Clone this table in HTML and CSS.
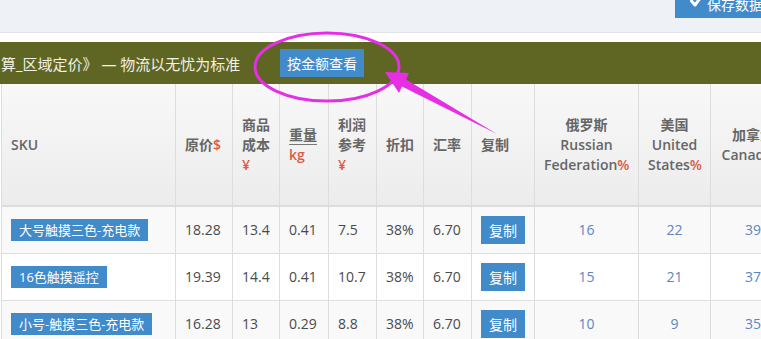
FILE: index.html
```html
<!DOCTYPE html>
<html lang="zh">
<head>
<meta charset="utf-8">
<title>区域定价</title>
<link rel="stylesheet" href="styles.css">
</head>
<body>
<div class="page">
  <div class="topbar">
    <button class="btn save">
      <svg class="check" width="12" height="12" viewBox="0 0 12 12"><polyline points="1.5,6 5,10 11,2" fill="none" stroke="#fff" stroke-width="3" stroke-linecap="round" stroke-linejoin="round"/></svg>
      <span>保存数据</span>
    </button>
  </div>
  <div class="spacer"></div>
  <div class="band">
    <span class="band-title">算_区域定价》 — 物流以无忧为标准</span>
    <button class="btn view">按金额查看</button>
  </div>
  <table class="grid">
    <colgroup>
      <col class="c-sku"><col class="c-price"><col class="c-cost"><col class="c-weight"><col class="c-profit"><col class="c-disc"><col class="c-rate"><col class="c-copy"><col class="c-ru"><col class="c-us"><col class="c-ca">
    </colgroup>
    <thead>
      <tr>
        <th>SKU</th>
        <th>原价<span class="red">$</span></th>
        <th>商品<br>成本<br><span class="red">¥</span></th>
        <th><span class="ul">重量</span><br><span class="red">kg</span></th>
        <th>利润<br>参考<br><span class="red">¥</span></th>
        <th>折扣</th>
        <th>汇率</th>
        <th>复制</th>
        <th class="ctr">俄罗斯<br>Russian<br>Federation<span class="red">%</span></th>
        <th class="ctr">美国<br>United<br>States<span class="red">%</span></th>
        <th class="ctr">加拿大<br>Canada<span class="red">%</span></th>
      </tr>
    </thead>
    <tbody>
      <tr class="odd">
        <td><span class="sku">大号触摸三色-充电款</span></td>
        <td>18.28</td><td>13.4</td><td>0.41</td><td>7.5</td><td>38%</td><td>6.70</td>
        <td><button class="btn copy">复制</button></td>
        <td class="ctr link">16</td><td class="ctr link">22</td><td class="ctr link">39</td>
      </tr>
      <tr>
        <td><span class="sku">16色触摸遥控</span></td>
        <td>19.39</td><td>14.4</td><td>0.41</td><td>10.7</td><td>38%</td><td>6.70</td>
        <td><button class="btn copy">复制</button></td>
        <td class="ctr link">15</td><td class="ctr link">21</td><td class="ctr link">37</td>
      </tr>
      <tr class="odd">
        <td><span class="sku">小号-触摸三色-充电款</span></td>
        <td>16.28</td><td>13</td><td>0.29</td><td>8.8</td><td>38%</td><td>6.70</td>
        <td><button class="btn copy">复制</button></td>
        <td class="ctr link">10</td><td class="ctr link">9</td><td class="ctr link">35</td>
      </tr>
    </tbody>
  </table>
  <svg class="annot" width="761" height="339" viewBox="0 0 761 339">
    <ellipse cx="327" cy="67" rx="72" ry="34" fill="none" stroke="#e62ee6" stroke-width="3"/>
    <polygon points="385,72 409,73 406,79.5 497,134 402,86.5 399,93" fill="#e62ee6"/>
  </svg>
</div>
</body>
</html>
```
FILE: styles.css
```css
html, body {
  margin: 0;
  padding: 0;
}
body {
  width: 761px;
  height: 339px;
  overflow: hidden;
  background: #fff;
  font-family: "Open Sans", "Noto Sans CJK SC", sans-serif;
  font-size: 14px;
  color: #4a4a4a;
}
.page {
  position: relative;
  width: 761px;
  height: 339px;
  overflow: hidden;
}
.btn {
  border: 0;
  margin: 0;
  background: #428bca;
  color: #fff;
  font-family: "Open Sans", "Noto Sans CJK SC", sans-serif;
  font-size: 14px;
  padding: 0;
  cursor: pointer;
}
.topbar {
  height: 32px;
  background: #eef1f6;
  border-bottom: 1px solid #e0e3e8;
  display: flex;
  justify-content: flex-end;
  align-items: flex-start;
}
.save {
  display: flex;
  align-items: center;
  gap: 5px;
  width: 110px;
  height: 28px;
  margin-top: -10px;
  margin-right: -24px;
  padding-left: 15px;
  box-sizing: border-box;
  white-space: nowrap;
}
.check {
  flex: none;
  margin-top: -6px;
}
.spacer {
  height: 9px;
}
.band {
  height: 42px;
  background: #5f6624;
  display: flex;
  align-items: center;
}
.band-title {
  flex: 0 0 280px;
  font-size: 15px;
  color: #f1f1e6;
  white-space: nowrap;
  padding-left: 1px;
  box-sizing: border-box;
}
.view {
  width: 84px;
  height: 28px;
}
.grid {
  border-collapse: collapse;
  table-layout: fixed;
  width: 794px;
  margin-left: 1px;
}
.c-sku { width: 174px; }
.c-price { width: 57px; }
.c-cost { width: 47px; }
.c-weight { width: 49px; }
.c-profit { width: 48px; }
.c-disc { width: 47px; }
.c-rate { width: 48px; }
.c-copy { width: 63px; }
.c-ru { width: 104px; }
.c-us { width: 72px; }
.c-ca { width: 85px; }
.grid th, .grid td {
  border: 1px solid #dddddd;
  padding: 0 9px;
  text-align: left;
  vertical-align: middle;
  white-space: nowrap;
}
.grid thead tr {
  background: linear-gradient(to bottom, #f8f8f8 0%, #ececec 100%);
}
.grid th {
  height: 121px;
  line-height: 20px;
  font-weight: 600;
  color: #666;
  border-top: 0;
  border-bottom: 2px solid #dddddd;
}
.grid td {
  height: 46px;
  line-height: 20px;
}
.grid tbody tr { background: #fff; }
.grid tbody tr.odd { background: #f9f9f9; }
.grid .ctr { text-align: center; }
.red { color: #dd5a43; }
.ul {
  display: inline-block;
  line-height: 18px;
  border-bottom: 1px solid #777;
}
.link { color: #5a86c2; }
.sku {
  display: inline-block;
  height: 22px;
  line-height: 22px;
  padding: 0 8px;
  background: #428bca;
  color: #fff;
  font-size: 13px;
  vertical-align: middle;
}
.copy {
  width: 44px;
  height: 28px;
  display: block;
}
.annot {
  position: absolute;
  left: 0;
  top: 0;
  pointer-events: none;
}
```
